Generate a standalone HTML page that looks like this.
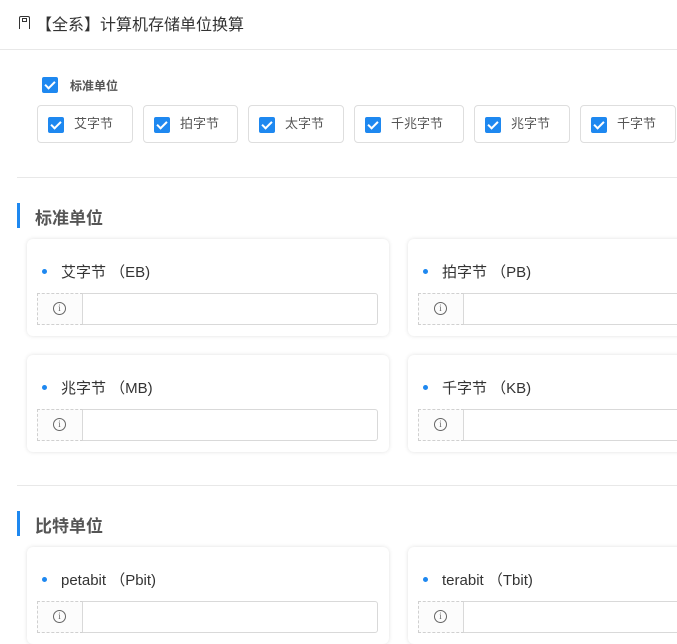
<!DOCTYPE html>
<html><head><meta charset="utf-8"><style>
*{margin:0;padding:0;box-sizing:border-box}
body{width:677px;height:630px;overflow:hidden;background:#fff;font-family:"Liberation Sans","Noto Sans CJK SC",sans-serif;position:relative;color:#333}
.a{position:absolute}
.hr{position:absolute;height:1px;background:#e8e8e8}
.cb{position:absolute;width:16px;height:16px;background:#1e88f0;border-radius:2px}
.cb:after{content:"";position:absolute;left:5px;top:2px;width:4px;height:8px;border:solid #fff;border-width:0 2px 2px 0;transform:rotate(45deg)}
.chip{position:absolute;top:105px;height:38px;border:1px solid #dedede;border-radius:4px;font-size:13px;color:#555;line-height:36px}
.chip .cb{left:10px;top:11px}
.chip span{position:absolute;left:36px}
.bar{position:absolute;left:17px;width:3px;height:25px;background:#1e88f0}
.st{position:absolute;left:35px;font-size:17px;font-weight:bold;color:#555}
.card{position:absolute;width:362px;height:97px;border-radius:6px;box-shadow:0 0 4px rgba(0,0,0,0.12);background:#fff}
.card .dot{position:absolute;left:15px;top:30px;width:5px;height:5px;border-radius:50%;background:#1e88f0}
.card .lb{position:absolute;left:34px;top:22px;font-size:15px;color:#333}
.card .in{position:absolute;left:10px;top:54px;width:341px;height:32px;border:1px solid #d9d9d9;border-radius:3px}
.card .pre{position:absolute;left:-1px;top:-1px;width:46px;height:32px;border:1px dashed #d0d0d0;border-right:1px solid #d9d9d9;background:#fcfcfc}
.card .pre i{position:absolute;left:15px;top:8px;width:13px;height:13px;border:1px solid #666;border-radius:50%;font-style:normal;font-size:9px;line-height:11px;text-align:center;color:#666;font-family:"Liberation Serif",serif}
</style></head><body>
<div class="a" style="left:19px;top:16px;width:11px;height:13px;border:1.5px solid #333;border-bottom:none;border-radius:2px 2px 0 0"></div>
<div class="a" style="left:22px;top:18px;width:5px;height:4px;border:1px solid #333"></div>
<div class="a" style="left:36px;top:11px;font-size:16px;color:#333">【全系】计算机存储单位换算</div>
<div class="hr" style="left:0;top:49px;width:677px"></div>
<div class="cb" style="left:42px;top:77px"></div>
<div class="a" style="left:70px;top:77px;font-size:12px;font-weight:bold;color:#555">标准单位</div>
<div class="chip" style="left:37px;width:96px"><div class="cb"></div><span>艾字节</span></div>
<div class="chip" style="left:143px;width:95px"><div class="cb"></div><span>拍字节</span></div>
<div class="chip" style="left:248px;width:96px"><div class="cb"></div><span>太字节</span></div>
<div class="chip" style="left:354px;width:110px"><div class="cb"></div><span>千兆字节</span></div>
<div class="chip" style="left:474px;width:96px"><div class="cb"></div><span>兆字节</span></div>
<div class="chip" style="left:580px;width:96px"><div class="cb"></div><span>千字节</span></div>
<div class="hr" style="left:17px;top:177px;width:660px"></div>
<div class="bar" style="top:203px"></div><div class="st" style="top:204px">标准单位</div>
<div class="card" style="left:27px;top:239px"><div class="dot"></div><div class="lb">艾字节 （EB)</div><div class="in"><div class="pre"><i>i</i></div></div></div>
<div class="card" style="left:408px;top:239px"><div class="dot"></div><div class="lb">拍字节 （PB)</div><div class="in"><div class="pre"><i>i</i></div></div></div>
<div class="card" style="left:27px;top:355px"><div class="dot"></div><div class="lb">兆字节 （MB)</div><div class="in"><div class="pre"><i>i</i></div></div></div>
<div class="card" style="left:408px;top:355px"><div class="dot"></div><div class="lb">千字节 （KB)</div><div class="in"><div class="pre"><i>i</i></div></div></div>
<div class="hr" style="left:17px;top:485px;width:660px"></div>
<div class="bar" style="top:511px"></div><div class="st" style="top:512px">比特单位</div>
<div class="card" style="left:27px;top:547px"><div class="dot"></div><div class="lb">petabit （Pbit)</div><div class="in"><div class="pre"><i>i</i></div></div></div>
<div class="card" style="left:408px;top:547px"><div class="dot"></div><div class="lb">terabit （Tbit)</div><div class="in"><div class="pre"><i>i</i></div></div></div>
</body></html>
